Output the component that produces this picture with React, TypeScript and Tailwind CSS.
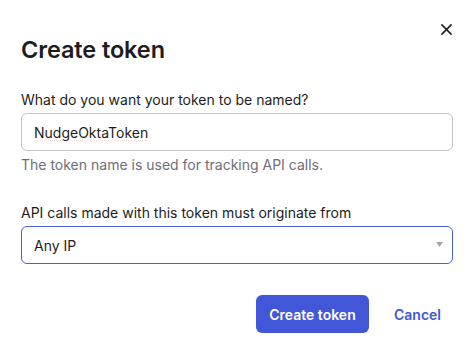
import React, { useState } from "react";

const App: React.FC = () => {
  const [name, setName] = useState("NudgeOktaToken");
  const [origin, setOrigin] = useState("Any IP");

  return (
    <div
      className="w-[474px] h-[357px] bg-white relative text-[#1d1d21]"
      style={{ fontFamily: "Inter, 'Noto Sans', sans-serif" }}
    >
      <button className="absolute top-[22px] right-[21px] w-[14px] h-[14px] flex items-center justify-center text-[#1d1d21]">
        <svg viewBox="0 0 12 12" className="w-[11px] h-[11px]" fill="none" stroke="currentColor" strokeWidth="1.7" strokeLinecap="round">
          <path d="M1 1L11 11M11 1L1 11" />
        </svg>
      </button>

      <div className="px-[21px] pt-[35px]">
        <h2 className="text-[23.5px] font-semibold leading-[30px] tracking-[-0.1px]">Create token</h2>

        <div className="mt-[25px]">
          <label className="block text-[14px] leading-[20px] text-[#1d1d21]">
            What do you want your token to be named?
          </label>
          <input
            type="text"
            value={name}
            onChange={(e) => setName(e.target.value)}
            className="mt-[3px] w-full h-[38px] rounded-[6px] border border-[#c4c4c7] px-[12px] text-[14px] text-[#1d1d21] outline-none underline decoration-dotted decoration-[#e05b5b] underline-offset-[3px]"
          />
          <p className="mt-[4px] text-[14px] leading-[20px] text-[#6e6e78]">
            The token name is used for tracking API calls.
          </p>
        </div>

        <div className="mt-[28px]">
          <label className="block text-[14px] leading-[20px] text-[#1d1d21]">
            API calls made with this token must originate from
          </label>
          <div className="relative mt-[3px]">
            <select
              value={origin}
              onChange={(e) => setOrigin(e.target.value)}
              className="appearance-none w-full h-[38px] rounded-[6px] border border-[#4a5ddb] px-[12px] text-[14px] text-[#1d1d21] bg-white outline-none"
            >
              <option>Any IP</option>
              <option>In zone</option>
            </select>
            <svg viewBox="0 0 8 6" className="absolute right-[10px] top-[16px] w-[7px] h-[5px]" fill="#a3a3a8">
              <path d="M0 0H8L4 6Z" />
            </svg>
          </div>
        </div>

        <div className="mt-[31px] flex items-center justify-end gap-[25px] pr-[12px]">
          <button className="h-[38px] px-[12px] rounded-[6px] bg-[#4257d8] text-white text-[14px] font-semibold w-[113px]">
            Create token
          </button>
          <button className="text-[14px] font-semibold text-[#4257d8]">Cancel</button>
        </div>
      </div>
    </div>
  );
};

export default App;
